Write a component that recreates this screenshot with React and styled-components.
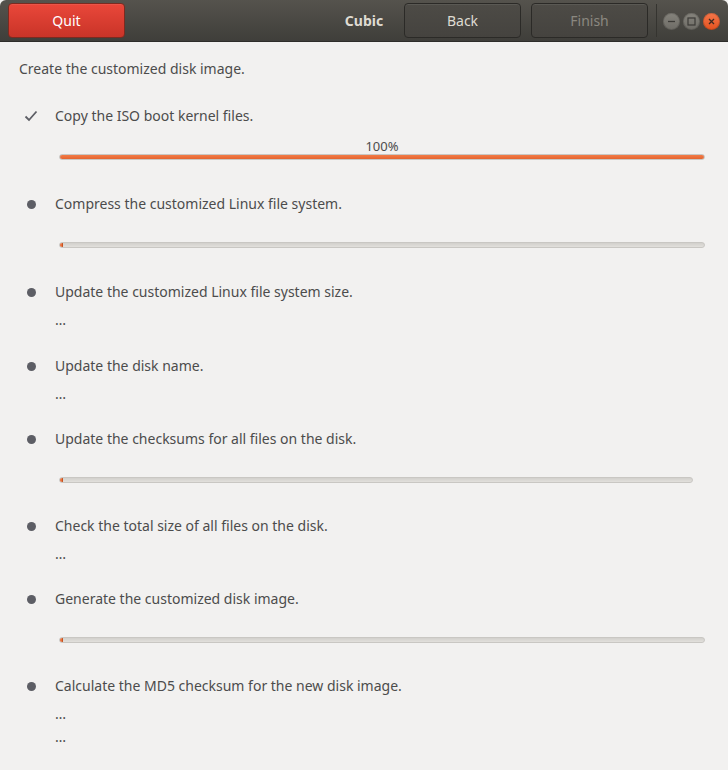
import React from 'react'
import styled, { createGlobalStyle } from 'styled-components'

const GlobalStyle = createGlobalStyle`
  html, body {
    margin: 0;
    padding: 0;
    background: #f2f1f0;
  }
  body {
    font-family: "Noto Sans", "DejaVu Sans", sans-serif;
    font-size: 14px;
    color: #4c4c4c;
  }
`;

const Window = styled.div`
  width: 728px;
  height: 770px;
  display: flex;
  flex-direction: column;
  background: #f2f1f0;
  overflow: hidden;
`;

const HeaderBar = styled.div`
  height: 42px;
  flex: 0 0 42px;
  box-sizing: border-box;
  display: grid;
  grid-template-columns: 1fr auto 1fr;
  align-items: center;
  padding: 0 8px 0 8px;
  background: linear-gradient(#55534d, #3f3e3a);
  border-bottom: 1px solid #2e2d2a;
  border-radius: 6px 6px 0 0;
`;

const HeaderButton = styled.button`
  width: 117px;
  height: 35px;
  box-sizing: border-box;
  border-radius: 4px;
  font-family: "Noto Sans", "DejaVu Sans", sans-serif;
  font-size: 14px;
  padding: 0;
  cursor: pointer;
  border: 1px solid ${p => (p.$danger ? '#7c2a20' : '#2b2a27')};
  color: ${p => (p.$danger ? '#ffffff' : p.disabled ? '#8b8880' : '#dfdbd2')};
  background: ${p =>
    p.$danger
      ? 'linear-gradient(#e9473a, #c93428)'
      : 'linear-gradient(#4d4b46, #45433f)'};
  box-shadow: inset 0 1px rgba(255, 255, 255, 0.08);
`;

const LeftSide = styled.div`
  display: flex;
  justify-content: flex-start;
`;

const RightSide = styled.div`
  display: flex;
  justify-content: flex-end;
  align-items: center;
`;

const Title = styled.div`
  text-align: center;
  color: #dfdbd2;
  font-weight: bold;
  font-size: 14px;
`;

const ButtonGroup = styled.div`
  display: flex;
  gap: 10px;
`;

const Separator = styled.div`
  width: 1px;
  height: 33px;
  background: #353430;
  margin: 0 6px 0 8px;
`;

const Controls = styled.div`
  display: flex;
  gap: 3px;
  align-items: center;
  margin-top: 1px;
`;

const ControlDot = styled.div`
  width: 17px;
  height: 17px;
  border-radius: 50%;
  display: flex;
  align-items: center;
  justify-content: center;
  background: ${p => (p.$close ? 'linear-gradient(#f4764a, #e3521f)' : 'linear-gradient(#85837c, #6e6c66)')};
  box-shadow: inset 0 0 0 1px rgba(0, 0, 0, 0.15);
`;

const Body = styled.div`
  padding: 17px 19px 0 19px;
  display: flex;
  flex-direction: column;
`;

const Heading = styled.div`
  line-height: 20px;
  height: 20px;
  margin-bottom: 27px;
`;

const Step = styled.div`
  display: flex;
  flex-direction: column;
  margin-bottom: ${p => p.$gap}px;
`;

const StepRow = styled.div`
  display: flex;
  align-items: center;
  height: 20px;
  line-height: 20px;
`;

const Marker = styled.div`
  width: 36px;
  display: flex;
  justify-content: center;
  align-items: center;
  padding-right: 12px;
  box-sizing: border-box;
`;

const Bullet = styled.span`
  width: 9px;
  height: 9px;
  border-radius: 50%;
  background: #5d5e65;
`;

const Detail = styled.div`
  padding-left: 36px;
  line-height: 20px;
  height: 20px;
  margin-top: ${p => p.$top}px;
`;

const ProgressWrap = styled.div`
  margin-left: 40px;
  width: ${p => p.$width}px;
  margin-top: 12px;
  display: flex;
  flex-direction: column;
`;

const ProgressLabel = styled.div`
  height: 16px;
  line-height: 16px;
  text-align: center;
  font-size: 13px;
`;

const Track = styled.div`
  height: 6px;
  box-sizing: border-box;
  border-radius: 3px;
  border: 1px solid #c9c7c3;
  background: linear-gradient(#d2d0cc, #e2e0dc);
  overflow: hidden;
  display: flex;
`;

const Fill = styled.div`
  height: 100%;
  background: linear-gradient(#f27c47, #e5642f);
  box-shadow: 0 0 0 1px #c5521f;
  border-radius: 2px;
`;

const steps = [
  { text: 'Copy the ISO boot kernel files.', done: true, progress: 100, label: '100%', width: 646, gap: 34 },
  { text: 'Compress the customized Linux file system.', progress: 0, width: 646, gap: 34 },
  { text: 'Update the customized Linux file system size.', dots: ['…'], gap: 26 },
  { text: 'Update the disk name.', dots: ['…'], gap: 25 },
  { text: 'Update the checksums for all files on the disk.', progress: 0, width: 634, gap: 33 },
  { text: 'Check the total size of all files on the disk.', dots: ['…'], gap: 25 },
  { text: 'Generate the customized disk image.', progress: 0, width: 646, gap: 33 },
  { text: 'Calculate the MD5 checksum for the new disk image.', dots: ['…', '…'], gap: 0 },
];

const Check = () => (
  <svg width="14" height="12" viewBox="0 0 14 12">
    <path d="M1.5 6.5 L5 10 L12.5 1.5" fill="none" stroke="#5d5e65" strokeWidth="1.8" />
  </svg>
);

const App = () => {
  return (
    <>
      <GlobalStyle />
      <Window>
        <HeaderBar>
          <LeftSide>
            <HeaderButton $danger>Quit</HeaderButton>
          </LeftSide>
          <Title>Cubic</Title>
          <RightSide>
            <ButtonGroup>
              <HeaderButton>Back</HeaderButton>
              <HeaderButton disabled>Finish</HeaderButton>
            </ButtonGroup>
            <Separator />
            <Controls>
              <ControlDot>
                <svg width="9" height="9" viewBox="0 0 9 9">
                  <path d="M1 4.5 H8" stroke="#3c3b37" strokeWidth="1.3" />
                </svg>
              </ControlDot>
              <ControlDot>
                <svg width="9" height="9" viewBox="0 0 9 9">
                  <rect x="1" y="1" width="7" height="7" fill="none" stroke="#3c3b37" strokeWidth="1.2" />
                </svg>
              </ControlDot>
              <ControlDot $close>
                <svg width="9" height="9" viewBox="0 0 9 9">
                  <path d="M2 2 L7 7 M7 2 L2 7" stroke="#3c2a22" strokeWidth="1.3" />
                </svg>
              </ControlDot>
            </Controls>
          </RightSide>
        </HeaderBar>
        <Body>
          <Heading>Create the customized disk image.</Heading>
          {steps.map((s, i) => (
            <Step key={i} $gap={s.gap}>
              <StepRow>
                <Marker>{s.done ? <Check /> : <Bullet />}</Marker>
                {s.text}
              </StepRow>
              {s.progress !== undefined && (
                <ProgressWrap $width={s.width}>
                  <ProgressLabel>{s.label || ''}</ProgressLabel>
                  <Track>
                    <Fill style={{ width: s.progress ? `${s.progress}%` : '2px' }} />
                  </Track>
                </ProgressWrap>
              )}
              {s.dots &&
                s.dots.map((d, j) => (
                  <Detail key={j} $top={j === 0 ? 8 : 3}>
                    {d}
                  </Detail>
                ))}
            </Step>
          ))}
        </Body>
      </Window>
    </>
  )
}

export default App
